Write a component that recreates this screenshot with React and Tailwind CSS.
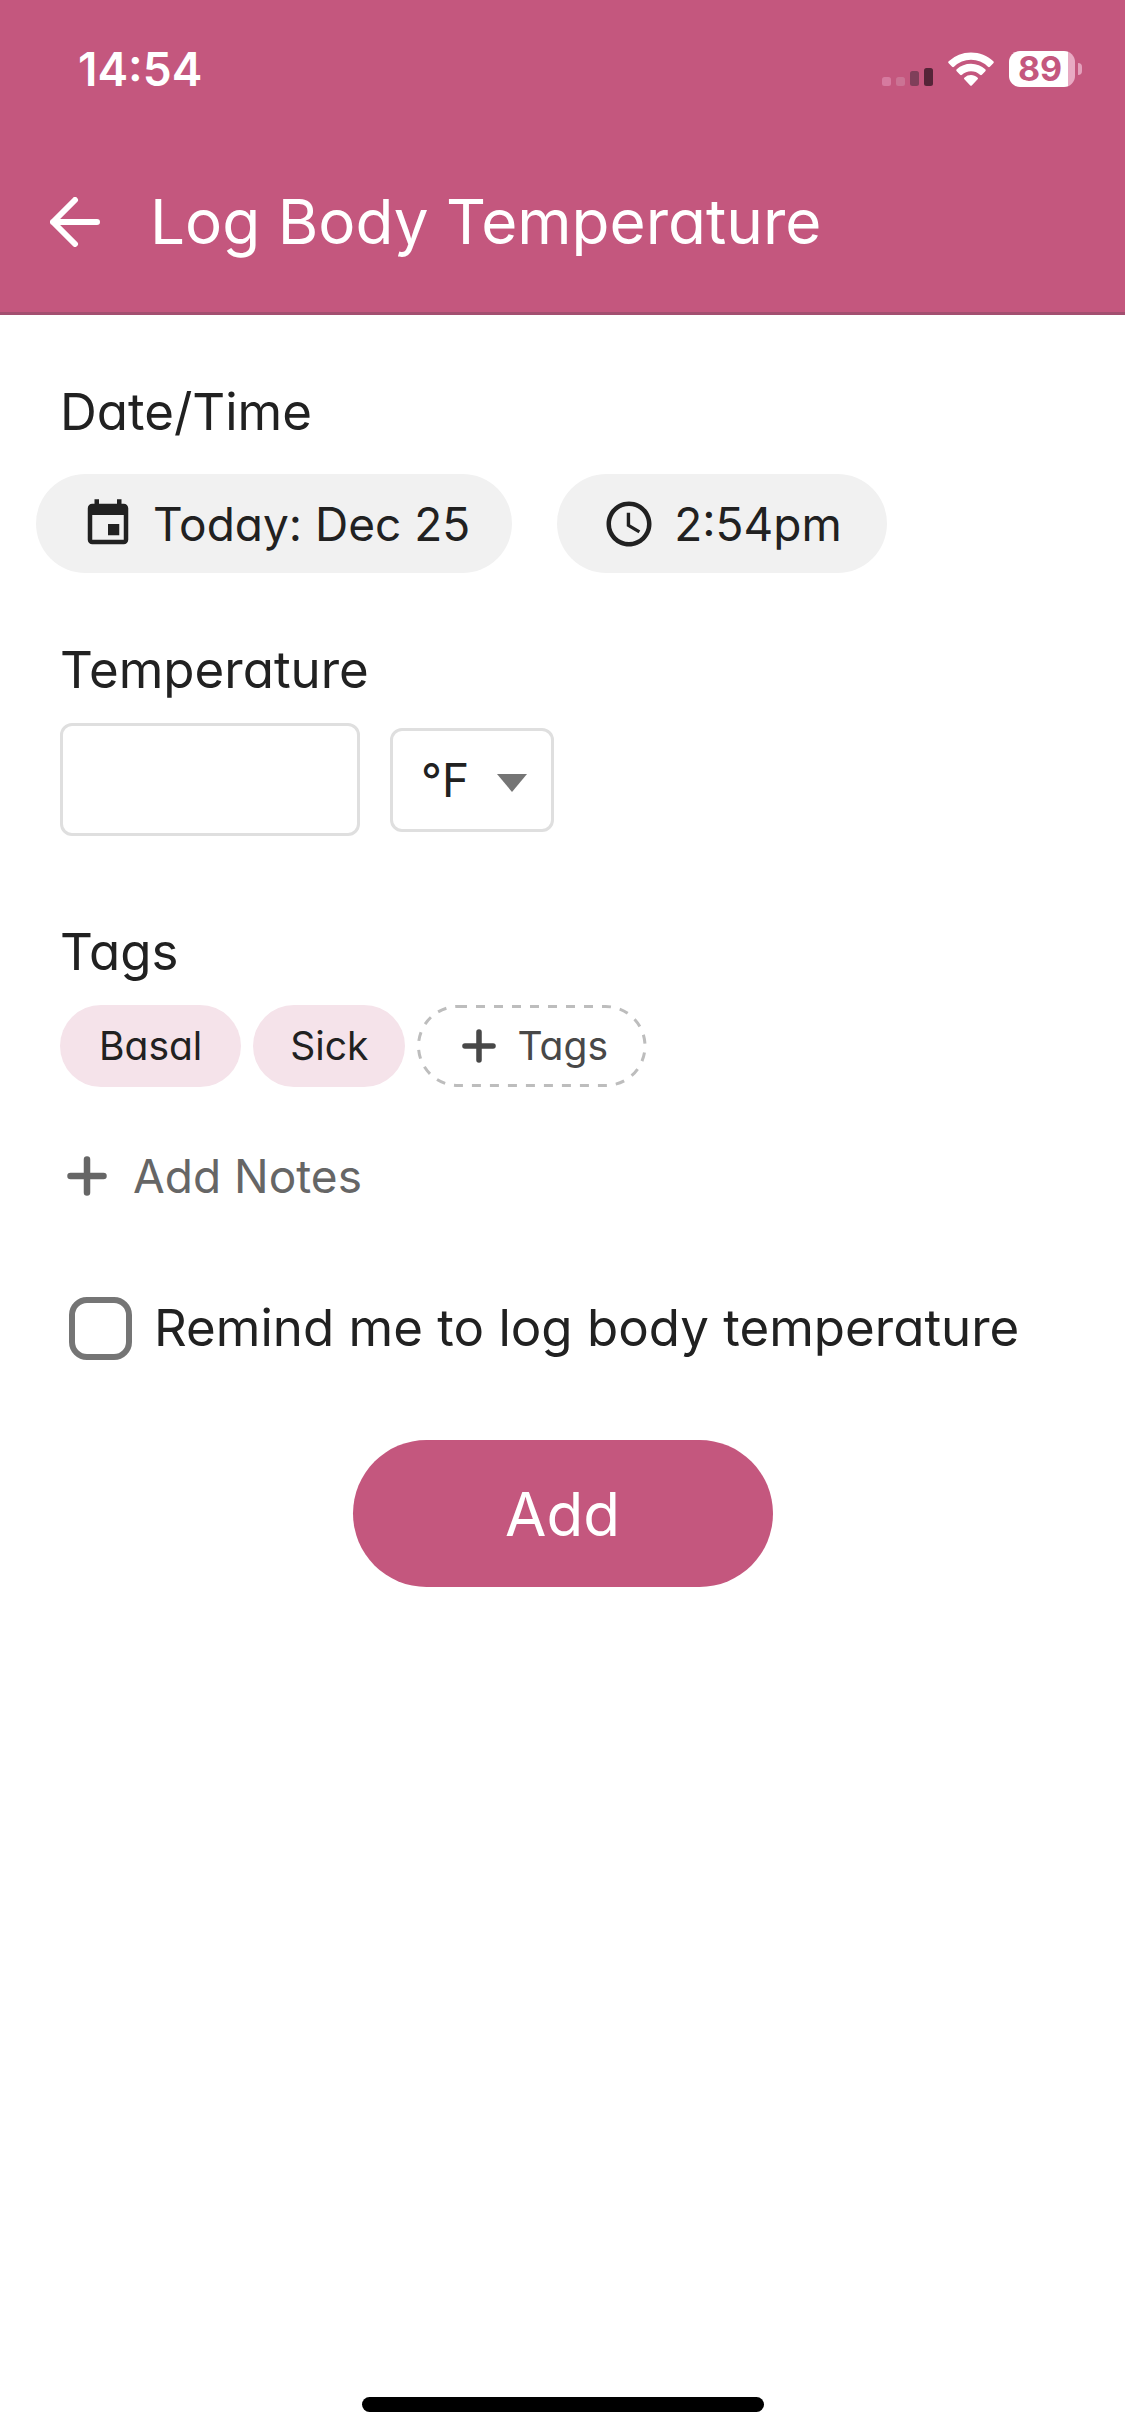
import { useState } from "react";
import { MdAccessTime, MdEvent } from "react-icons/md";

function SignalIcon() {
  return (
    <svg viewBox="0 0 51 18" className="h-[18px] w-[51px]" aria-hidden="true">
      <rect x="0" y="9" width="9" height="9" rx="2.5" fill="#d67a9f" />
      <rect x="14" y="9" width="9" height="9" rx="2.5" fill="#cb7394" />
      <rect x="28" y="3" width="9" height="15" rx="2.5" fill="#7f3f5a" />
      <rect x="42" y="0" width="9" height="18" rx="2.5" fill="#552438" />
    </svg>
  );
}

function WifiIcon() {
  return (
    <svg viewBox="0 0 46 34" className="h-[34px] w-[46px]" fill="#fff" aria-hidden="true">
      <path d="M23 0.5c8.6 0 16.400 3.300 22.300 8.800a1.400 1.400 0 0 1 0 2l-3.400 3.400a1.400 1.400 0 0 1-1.900 0A25 25 0 0 0 23 7.800a25 25 0 0 0-17 6.900a1.400 1.400 0 0 1-1.900 0L0.700 11.300a1.400 1.400 0 0 1 0-2A32.500 32.500 0 0 1 23 0.500z" />
      <path d="M23 11.800c5.500 0 10.500 2.100 14.300 5.500a1.400 1.400 0 0 1 0 2l-3.400 3.400a1.400 1.400 0 0 1-1.900 0A13.600 13.600 0 0 0 23 19.300c-3.500 0-6.600 1.300-9 3.400a1.400 1.400 0 0 1-1.900 0l-3.400-3.400a1.400 1.400 0 0 1 0-2A21.300 21.300 0 0 1 23 11.800z" />
      <path d="M23 23c2.500 0 4.700 0.900 6.400 2.400a1.300 1.300 0 0 1 0 2L24 33.200a1.400 1.400 0 0 1-2 0L16.600 27.400a1.300 1.300 0 0 1 0-2A9.700 9.700 0 0 1 23 23z" />
    </svg>
  );
}

function Battery({ level }) {
  return (
    <div className="flex items-center gap-[3px]">
      <div className="flex h-9 w-[66px] items-center justify-center rounded-[11px] bg-linear-to-r from-white from-89% to-[#e8aac3] to-89% pr-1 text-[34px] leading-9 font-bold text-[#c4577e]">
        {level}
      </div>
      <div className="h-3 w-1 rounded-r-full bg-[#e3a0bb]" />
    </div>
  );
}

function BackIcon() {
  return (
    <svg viewBox="0 0 50 50" className="h-[50px] w-[50px]" fill="none" stroke="#fff" strokeWidth="6" strokeLinecap="round" strokeLinejoin="round" aria-hidden="true">
      <path d="M47 25H3M25 3L3 25l22 22" />
    </svg>
  );
}

function PlusIcon({ className }) {
  return (
    <svg viewBox="0 0 40 40" className={className} fill="none" stroke="currentColor" strokeWidth="6.500" strokeLinecap="round" aria-hidden="true">
      <path d="M20 3.500v33M3.500 20h33" />
    </svg>
  );
}

export default function App() {
  const [temperature, setTemperature] = useState("");
  const [remind, setRemind] = useState(false);

  return (
    <div className="flex min-h-screen flex-col bg-white font-['Inter',sans-serif] text-[51px] leading-16 text-[#212121] [font-feature-settings:'cv11']">
      <header className="border-b-[3px] border-[#a34f70] bg-[#c4577e] pt-[45px] pb-[54px] text-white">
        <div className="flex h-12 items-center justify-between pr-[43px] pl-[78px]">
          <span className="text-[46px] leading-12 font-semibold">14:54</span>
          <div className="flex items-center gap-[15px]">
            <div className="flex items-end gap-[15px]">
              <SignalIcon />
              <WifiIcon />
            </div>
            <Battery level={89} />
          </div>
        </div>
        <div className="mt-[93px] flex h-[72px] items-center gap-[50px] pl-[50px]">
          <button type="button" aria-label="Back">
            <BackIcon />
          </button>
          <h1 className="text-[62px] leading-[72px]">Log Body Temperature</h1>
        </div>
      </header>

      <main className="flex flex-1 flex-col px-[60px] pt-[65px]">
        <h2>Date/Time</h2>
        <div className="-mx-6 mt-[30px] flex gap-[45px] text-[46px]">
          <button type="button" className="flex h-[99px] items-center gap-[18px] rounded-full bg-[#f1f1f1] pr-[42px] pl-[45px]">
            <MdEvent className="size-[54px]" />
            Today: Dec 25
          </button>
          <button type="button" className="flex h-[99px] items-center gap-[18px] rounded-full bg-[#f1f1f1] pr-[45px] pl-[45px]">
            <MdAccessTime className="size-[54px]" />
            2:54pm
          </button>
        </div>

        <label htmlFor="temperature" className="mt-[65px]">
          Temperature
        </label>
        <div className="mt-[21px] flex items-center gap-[30px]">
          <input
            id="temperature"
            type="text"
            inputMode="decimal"
            value={temperature}
            onChange={(e) => setTemperature(e.target.value)}
            className="h-[113px] w-[300px] rounded-xl border-[3px] border-[#dfdfdf] px-6 outline-none"
          />
          <div className="relative">
            <select
              aria-label="Temperature unit"
              defaultValue="F"
              className="h-[104px] w-[164px] appearance-none rounded-xl border-[3px] border-[#dfdfdf] bg-white pl-7 text-[46px] outline-none"
            >
              <option value="F">°F</option>
              <option value="C">°C</option>
            </select>
            <svg viewBox="0 0 30 18" className="pointer-events-none absolute top-[46px] right-[27px] h-[18px] w-[30px]" fill="#757575" aria-hidden="true">
              <path d="M0 0h30L15 18z" />
            </svg>
          </div>
        </div>

        <h2 className="mt-[84px]">Tags</h2>
        <div className="mt-[21px] flex gap-3 text-[39px]">
          <button type="button" className="h-[82px] rounded-full bg-[#f5e3ea] px-[39px]">
            Basal
          </button>
          <button type="button" className="h-[82px] rounded-full bg-[#f5e3ea] px-[37px]">
            Sick
          </button>
          <button type="button" className="relative flex h-[82px] items-center gap-[21px] rounded-full pr-[39px] pl-[45px] text-[#484848]">
            <svg className="absolute inset-0 size-full" fill="none" stroke="#bdbdbd" strokeWidth="3" strokeDasharray="9 9" aria-hidden="true">
              <rect x="1.500" y="1.500" rx="39.500" className="h-[calc(100%-3px)] w-[calc(100%-3px)]" />
            </svg>
            <PlusIcon className="size-[34px]" />
            Tags
          </button>
        </div>

        <button type="button" className="mt-[60px] flex h-[58px] items-center gap-[26px] self-start pl-[7px] text-[46px] text-[#666]">
          <PlusIcon className="size-10" />
          Add Notes
        </button>

        <label className="mt-[91px] flex items-center gap-[22px] pl-[9px]">
          <input
            type="checkbox"
            checked={remind}
            onChange={(e) => setRemind(e.target.checked)}
            className="size-[63px] shrink-0 appearance-none rounded-[18px] border-[6px] border-[#757575] checked:bg-[#c4577e]"
          />
          Remind me to log body temperature
        </label>

        <button type="button" className="mt-20 h-[147px] w-[420px] self-center rounded-full bg-[#c4577e] text-[60px] text-white">
          Add
        </button>
      </main>

      <div className="mb-6 h-[15px] w-[402px] self-center rounded-full bg-black" />
    </div>
  );
}
